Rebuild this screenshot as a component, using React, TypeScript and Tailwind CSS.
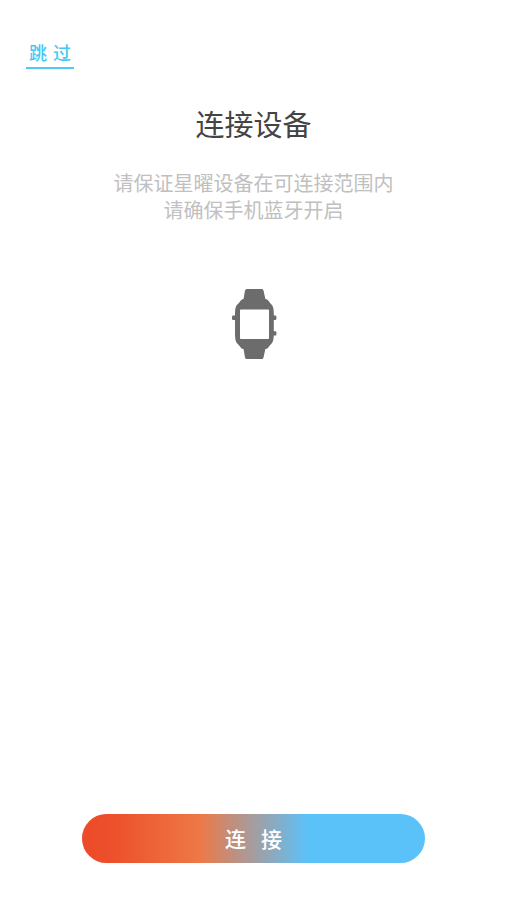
import React from 'react';

const hints = ['请保证星曜设备在可连接范围内', '请确保手机蓝牙开启'];

const WatchIcon = () => (
    <svg viewBox="0 0 46 72" className="h-[72px] w-[46px]" fill="#6c6c6c" aria-hidden="true">
        {/* Strap */}
        <path d="M12 14 L14 2.6 Q14.3 1 16 1 H31 Q32.2 1 32.5 2.6 L35 14 Z" />
        <path d="M12 58 L14 69.4 Q14.3 71 16 71 H31 Q32.2 71 32.5 69.4 L35 58 Z" />
        {/* Side buttons */}
        <rect x="1" y="27.5" width="5" height="4.4" rx="1.2" />
        <rect x="40" y="27.5" width="5.4" height="4.4" rx="1.2" />
        <rect x="40" y="43.2" width="5.4" height="4.4" rx="1.2" />
        {/* Case with the screen cut out */}
        <path
            fillRule="evenodd"
            d="M12 11 H35 Q37 11.5 38 13.5 Q39 15 41 17 Q42.8 19.5 42.8 26 V46 Q42.8 52.5 41 55 Q39 57 38 58.5 Q37 60.5 35 61 H12 Q10 60.5 9 58.5 Q8 57 5.8 55 Q4 52.5 4 46 V26 Q4 19.5 5.8 17 Q8 15 9 13.5 Q10 11.5 12 11 Z M9.8 21.5 Q9 21.5 9 22.3 V50.2 Q9 51 9.8 51 H37.2 Q38 51 38 50.2 V22.3 Q38 21.5 37.2 21.5 Z"
        />
    </svg>
);

export default function App() {
    return (
        <div className="flex min-h-screen flex-col bg-white font-['Noto_Sans_CJK_SC',sans-serif]">

            {/* Skip */}
            <header className="flex px-[26px] pt-10">
                <a
                    href="#skip"
                    aria-label="跳过"
                    className="flex h-[29px] w-12 justify-center gap-1.5 border-b-2 border-[#4dcbf3] text-[18px] leading-6 font-medium text-[#45c9f4]"
                >
                    <span>跳</span>
                    <span>过</span>
                </a>
            </header>

            {/* Instructions */}
            <main className="flex flex-col items-center px-6 pt-[34px] text-center">
                <h1 className="text-[29px] leading-10 text-[#444444]">连接设备</h1>
                <div className="mt-[26px] text-[20px] leading-[27px] text-[#c0c0c0]">
                    {hints.map((hint) => (
                        <p key={hint}>{hint}</p>
                    ))}
                </div>
                <div className="mt-[65px]">
                    <WatchIcon />
                </div>
            </main>

            {/* Connect */}
            <footer className="mt-auto px-[82px] pt-10 pb-[37px]">
                <button
                    type="button"
                    aria-label="连接"
                    className="flex h-[49px] w-full items-center justify-center gap-[15px] rounded-full bg-[linear-gradient(90deg,#ec4a28_0%,#ec4f2b_8%,#ee7845_34%,#5bc2f9_66%,#5bc2f9_100%)] text-[21px] font-medium text-white"
                >
                    <span>连</span>
                    <span>接</span>
                </button>
            </footer>

        </div>
    );
}
